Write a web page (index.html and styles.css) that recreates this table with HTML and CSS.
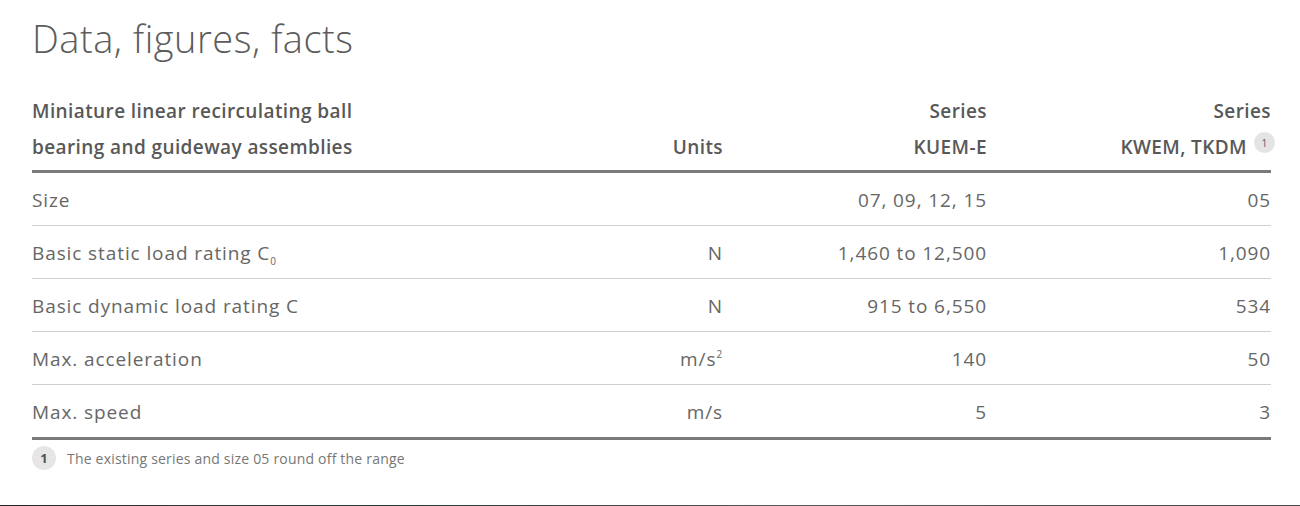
FILE: index.html
```html
<!DOCTYPE html>
<html lang="en">
<head>
<meta charset="utf-8">
<title>Data, figures, facts</title>
<link rel="stylesheet" href="styles.css">
</head>
<body>
<main class="page">
  <h2 class="title">Data, figures, facts</h2>
  <table class="facts">
    <thead>
      <tr>
        <th class="c-name">Miniature linear recirculating ball<br>bearing and guideway assemblies</th>
        <th class="c-unit">Units</th>
        <th class="c-s1">Series<br>KUEM-E</th>
        <th class="c-s2">Series<br>KWEM, TKDM<span class="note">1</span></th>
      </tr>
    </thead>
    <tbody>
      <tr><td>Size</td><td class="r"></td><td class="r">07, 09, 12, 15</td><td class="r">05</td></tr>
      <tr><td>Basic static load rating C<sub>0</sub></td><td class="r">N</td><td class="r">1,460 to 12,500</td><td class="r">1,090</td></tr>
      <tr><td>Basic dynamic load rating C</td><td class="r">N</td><td class="r">915 to 6,550</td><td class="r">534</td></tr>
      <tr><td>Max. acceleration</td><td class="r">m/s<sup>2</sup></td><td class="r">140</td><td class="r">50</td></tr>
      <tr><td>Max. speed</td><td class="r">m/s</td><td class="r">5</td><td class="r">3</td></tr>
    </tbody>
  </table>
  <div class="footnote">
    <span class="fn-badge">1</span>
    <span class="fn-text">The existing series and size 05 round off the range</span>
  </div>
</main>
<div class="strip"></div>
</body>
</html>
```

FILE: styles.css
```css
html, body {
  margin: 0;
  padding: 0;
  background: #fff;
}
body {
  font-family: "Open Sans", "Noto Sans", Arial, sans-serif;
  color: #666;
}
.page {
  padding: 0 29px 0 32px;
}
.title {
  margin: 13px 0 0;
  font-size: 38px;
  line-height: 50px;
  font-weight: 300;
  color: #5c5c5c;
  letter-spacing: 0.5px;
}
.facts {
  width: 1239px;
  margin-top: 30px;
  border-collapse: collapse;
  table-layout: fixed;
}
.facts th {
  font-size: 19px;
  line-height: 36px;
  font-weight: 600;
  color: #585858;
  vertical-align: bottom;
  padding: 0 0 5px;
  border-bottom: 3px solid #7a7a7a;
  text-align: right;
  letter-spacing: 0.4px;
}
.facts th.c-name {
  text-align: left;
  width: 568px;
}
.facts th.c-unit { width: 123px; }
.facts th.c-s1 { width: 264px; }
.facts th.c-s2 { width: 284px; }
.note {
  display: inline-flex;
  align-items: center;
  justify-content: center;
  width: 21px;
  height: 21px;
  margin-left: 7px;
  margin-right: -4px;
  border-radius: 50%;
  background: #e4e4e4;
  color: #666;
  font-size: 11px;
  font-weight: 400;
  line-height: 1;
  letter-spacing: 0;
  vertical-align: middle;
  position: relative;
  top: -6px;
}
.facts td {
  font-size: 19px;
  line-height: 22px;
  font-weight: 400;
  color: #666;
  padding: 16px 0 14px;
  border-bottom: 1px solid #cfcfcf;
  letter-spacing: 0.9px;
}
.facts tbody tr:last-child td {
  border-bottom: 3px solid #7a7a7a;
}
.facts td.r { text-align: right; }
.facts sub {
  font-size: 10px;
  vertical-align: -5px;
  line-height: 0;
}
.facts sup {
  font-size: 10px;
  vertical-align: 8px;
  line-height: 0;
}
.footnote {
  display: flex;
  align-items: center;
  gap: 11px;
  margin-top: 6px;
}
.fn-badge {
  display: flex;
  align-items: center;
  justify-content: center;
  width: 24px;
  height: 24px;
  border-radius: 50%;
  background: #e6e6e6;
  color: #555;
  font-size: 13px;
  font-weight: 700;
}
.fn-text {
  font-size: 14px;
  color: #777;
  letter-spacing: 0.2px;
}
.strip {
  margin-top: 35px;
  height: 4px;
  background: linear-gradient(90deg, #222 0%, #333 15%, #1d3a30 30%, #444 45%, #555 60%, #4a4a4a 100%);
}
```
